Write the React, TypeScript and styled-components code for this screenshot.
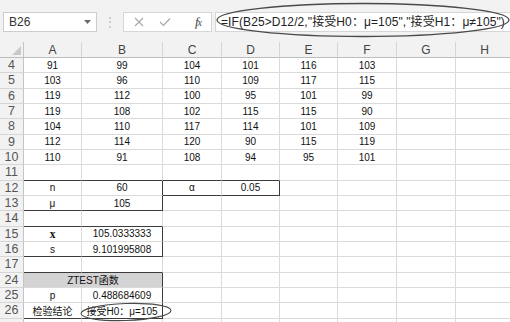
import React from "react";
import styled, { createGlobalStyle } from "styled-components";

const GlobalStyle = createGlobalStyle`
  html, body { margin: 0; padding: 0; background: #fff; overflow: hidden; }
  body { font-family: "Liberation Sans", "Noto Sans CJK SC", sans-serif; }
`;

const Page = styled.div`
  position: relative;
  width: 510px;
  height: 322px;
  overflow: hidden;
  background: #f2f2f2;
`;

const Toolbar = styled.div`
  height: 42px;
  box-sizing: border-box;
  padding: 12px 0 0 3px;
  display: flex;
  align-items: flex-start;
  background: #f2f2f2;
`;

const NameBox = styled.div`
  width: 94px;
  height: 20px;
  box-sizing: border-box;
  background: #fff;
  border: 1px solid #cdcdcd;
  display: flex;
  align-items: center;
  justify-content: space-between;
  padding: 0 5px 0 5px;
  font-size: 12px;
  color: #333;
`;

const Grip = styled.div`
  width: 26px;
  height: 20px;
  display: flex;
  align-items: center;
  justify-content: center;
  color: #bdbdbd;
  font-size: 12px;
`;

const ActionBox = styled.div`
  width: 89px;
  height: 20px;
  box-sizing: border-box;
  background: #fff;
  border: 1px solid #d6d6d6;
  display: flex;
  align-items: center;
  padding-left: 1px;
`;

const ActionSlot = styled.div<{ $gap?: number }>`
  width: 26px;
  height: 18px;
  margin-left: ${(p) => p.$gap ?? 0}px;
  display: flex;
  align-items: center;
  justify-content: center;
`;

const Fx = styled.span`
  font-family: "Liberation Serif", serif;
  font-style: italic;
  font-size: 13px;
  color: #444;
  letter-spacing: -1px;
  & > small { font-size: 10px; }
`;

const FormulaBox = styled.div`
  flex: 1;
  margin-left: 3px;
  height: 20px;
  box-sizing: border-box;
  background: #fff;
  border: 1px solid #d6d6d6;
  border-right: none;
  padding-left: 5px;
  font-size: 12px;
  letter-spacing: 0.1px;
  line-height: 18px;
  color: #222;
  white-space: nowrap;
  overflow: hidden;
`;

const Sheet = styled.div`
  display: grid;
  grid-template-columns: 24px 58px 81px 59px 58px 58px 59px 59px 58px;
  grid-template-rows: 16px repeat(18, 15.34px);
  background: #fff;
`;

const Corner = styled.div`
  background: #f2f2f2;
  border-right: 1px solid #c4c4c4;
  border-bottom: 1px solid #bdbdbd;
  box-sizing: border-box;
  display: flex;
  align-items: flex-end;
  justify-content: flex-end;
  padding: 0 2px 2px 0;
`;

const ColHead = styled.div`
  background: #f2f2f2;
  border-right: 1px solid #d6d6d6;
  border-bottom: 1px solid #bdbdbd;
  box-sizing: border-box;
  display: flex;
  align-items: center;
  justify-content: center;
  font-size: 12px;
  color: #444;
`;

const RowHead = styled.div`
  background: #f2f2f2;
  border-right: 1px solid #c4c4c4;
  border-bottom: 1px solid #d6d6d6;
  box-sizing: border-box;
  display: flex;
  align-items: center;
  justify-content: center;
  font-size: 12.5px;
  color: #555;
`;

const Cell = styled.div<{ $db: boolean; $dr: boolean; $span?: number; $fill?: boolean }>`
  grid-column: span ${(p) => p.$span ?? 1};
  box-sizing: border-box;
  border-right: 1px solid ${(p) => (p.$dr ? "#3c3c3c" : "#dadada")};
  border-bottom: 1px solid ${(p) => (p.$db ? "#3c3c3c" : "#dadada")};
  background: ${(p) => (p.$fill ? "#d3d3d3" : "#fff")};
  display: flex;
  align-items: center;
  justify-content: center;
  font-size: 10px;
  color: #111;
  white-space: nowrap;
`;

const SerifX = styled.span`
  font-family: "Liberation Serif", serif;
  font-size: 11.5px;
  font-weight: bold;
`;

const Annotation = styled.svg<{ $left: number; $top: number }>`
  position: absolute;
  left: ${(p) => p.$left}px;
  top: ${(p) => p.$top}px;
  overflow: visible;
  pointer-events: none;
`;

type Box = { r0: number; r1: number; c0: number; c1: number };

// display row index: 0 -> row 4 ...; the last row (27) is only a sliver
const rowNumbers = ["4", "5", "6", "7", "8", "9", "10", "11", "12", "13", "14", "15", "16", "17", "24", "25", "26", ""];

const boxes: Box[] = [
  { r0: 8, r1: 9, c0: 1, c1: 2 },
  { r0: 8, r1: 8, c0: 3, c1: 4 },
  { r0: 11, r1: 12, c0: 1, c1: 2 },
  { r0: 14, r1: 16, c0: 1, c1: 2 },
];

const darkBottom = (i: number, c: number) =>
  boxes.some((b) => c >= b.c0 && c <= b.c1 && (i === b.r1 || i + 1 === b.r0));
const darkRight = (i: number, c: number) =>
  boxes.some((b) => i >= b.r0 && i <= b.r1 && (c === b.c1 || c + 1 === b.c0));

const values: Record<number, React.ReactNode[]> = {
  0: ["91", "99", "104", "101", "116", "103"],
  1: ["103", "96", "110", "109", "117", "115"],
  2: ["119", "112", "100", "95", "101", "99"],
  3: ["119", "108", "102", "115", "115", "90"],
  4: ["104", "110", "117", "114", "101", "109"],
  5: ["112", "114", "120", "90", "115", "119"],
  6: ["110", "91", "108", "94", "95", "101"],
  8: ["n", "60", "α", "0.05"],
  9: ["μ", "105"],
  11: [<SerifX key="x">x</SerifX>, "105.0333333"],
  12: ["s", "9.101995808"],
  15: ["p", "0.488684609"],
  16: ["检验结论", "接受H0：μ=105"],
};

const columns = ["A", "B", "C", "D", "E", "F", "G", "H"];

export default function App() {
  return (
    <Page>
      <GlobalStyle />
      <Toolbar>
        <NameBox>
          <span>B26</span>
          <svg width="7" height="4" viewBox="0 0 7 4">
            <path d="M0 0 L7 0 L3.5 4 Z" fill="#6a6a6a" />
          </svg>
        </NameBox>
        <Grip>⋮</Grip>
        <ActionBox>
          <ActionSlot $gap={1}>
            <svg width="10" height="10" viewBox="0 0 10 10">
              <path d="M1 1 L9 9 M9 1 L1 9" stroke="#a8a8a8" strokeWidth="1.1" fill="none" />
            </svg>
          </ActionSlot>
          <ActionSlot>
            <svg width="12" height="10" viewBox="0 0 12 10">
              <path d="M1 5 L4.5 8.5 L11 1.5" stroke="#a8a8a8" strokeWidth="1.2" fill="none" />
            </svg>
          </ActionSlot>
          <ActionSlot $gap={7}>
            <Fx>
              f<small>x</small>
            </Fx>
          </ActionSlot>
        </ActionBox>
        <FormulaBox>=IF(B25&gt;D12/2,"接受H0：μ=105","接受H1：μ≠105")</FormulaBox>
      </Toolbar>
      <Sheet>
        <Corner>
          <svg width="9" height="9" viewBox="0 0 9 9">
            <path d="M9 0 L9 9 L0 9 Z" fill="#c9c9c9" />
          </svg>
        </Corner>
        {columns.map((c) => (
          <ColHead key={c}>{c}</ColHead>
        ))}
        {rowNumbers.map((rn, i) => {
          const vals = values[i] ?? [];
          const cells: React.ReactNode[] = [<RowHead key={`h${i}`}>{rn}</RowHead>];
          if (i === 14) {
            cells.push(
              <Cell key={`c${i}-1`} $span={2} $fill $db={darkBottom(i, 1)} $dr={darkRight(i, 2)}>
                ZTEST函数
              </Cell>
            );
            for (let c = 3; c <= 8; c++) {
              cells.push(<Cell key={`c${i}-${c}`} $db={darkBottom(i, c)} $dr={darkRight(i, c)} />);
            }
          } else {
            for (let c = 1; c <= 8; c++) {
              cells.push(
                <Cell key={`c${i}-${c}`} $db={darkBottom(i, c)} $dr={darkRight(i, c)}>
                  {vals[c - 1] ?? null}
                </Cell>
              );
            }
          }
          return cells;
        })}
      </Sheet>
      <Annotation $left={214} $top={1} width="298" height="38" viewBox="0 0 298 38">
        <ellipse cx="149" cy="19" rx="146" ry="16.5" fill="none" stroke="#4a4a4a" strokeWidth="1.3" />
      </Annotation>
      <Annotation $left={79} $top={302} width="94" height="20" viewBox="0 0 94 20">
        <ellipse cx="47" cy="10" rx="45" ry="8.5" fill="none" stroke="#4a4a4a" strokeWidth="1.1" transform="rotate(-2 47 10)" />
      </Annotation>
    </Page>
  );
}
